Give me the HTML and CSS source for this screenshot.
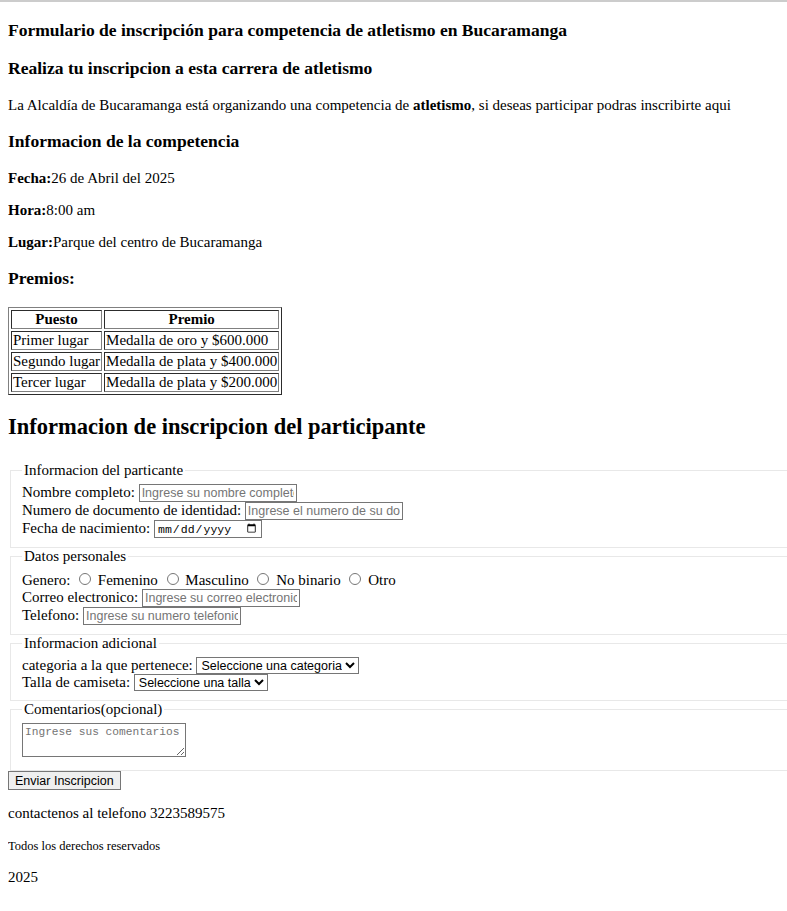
FILE: index.html
```html
<!DOCTYPE html>
<html lang="es">
<head>
<meta charset="utf-8">
<title>Formulario de inscripción</title>
<link rel="stylesheet" href="styles.css">
</head>
<body>
<header>
<h3>Formulario de inscripción para competencia de atletismo en Bucaramanga</h3>
</header>
<main>
<section>
<h3>Realiza tu inscripcion a esta carrera de atletismo</h3>
<p>La Alcaldía de Bucaramanga está organizando una competencia de <strong>atletismo</strong>, si deseas participar podras inscribirte aqui</p>
<h3>Informacion de la competencia</h3>
<p><strong>Fecha:</strong>26 de Abril del 2025</p>
<p><strong>Hora:</strong>8:00 am</p>
<p><strong>Lugar:</strong>Parque del centro de Bucaramanga</p>
<h3>Premios:</h3>
<table class="prizes">
<thead>
<tr><th>Puesto</th><th>Premio</th></tr>
</thead>
<tbody>
<tr><td>Primer lugar</td><td>Medalla de oro y $600.000</td></tr>
<tr><td>Segundo lugar</td><td>Medalla de plata y $400.000</td></tr>
<tr><td>Tercer lugar</td><td>Medalla de plata y $200.000</td></tr>
</tbody>
</table>
</section>
<section>
<h2 class="form-title">Informacion de inscripcion del participante</h2>
<form class="form">
<fieldset class="group">
<legend>Informacion del particante</legend>
<label for="nombre">Nombre completo:</label> <input class="field" type="text" id="nombre" placeholder="Ingrese su nombre completo"><br>
<label for="doc">Numero de documento de identidad:</label> <input class="field" type="text" id="doc" placeholder="Ingrese el numero de su documento"><br>
<label for="fecha">Fecha de nacimiento:</label> <input class="date" type="date" id="fecha">
</fieldset>
<fieldset class="group">
<legend>Datos personales</legend>
Genero: <input class="radio" type="radio" name="genero" id="f"> <label for="f">Femenino</label> <input class="radio" type="radio" name="genero" id="m"> <label for="m">Masculino</label> <input class="radio" type="radio" name="genero" id="nb"> <label for="nb">No binario</label> <input class="radio" type="radio" name="genero" id="o"> <label for="o">Otro</label><br>
<label for="correo">Correo electronico:</label> <input class="field" type="email" id="correo" placeholder="Ingrese su correo electronico"><br>
<label for="tel">Telefono:</label> <input class="field" type="tel" id="tel" placeholder="Ingrese su numero telefonico">
</fieldset>
<fieldset class="group">
<legend>Informacion adicional</legend>
<label for="cat">categoria a la que pertenece:</label> <select class="choice" id="cat"><option>Seleccione una categoria</option></select><br>
<label for="talla">Talla de camiseta:</label> <select class="choice" id="talla"><option>Seleccione una talla</option></select>
</fieldset>
<fieldset class="group">
<legend>Comentarios(opcional)</legend>
<textarea class="notes" placeholder="Ingrese sus comentarios"></textarea>
</fieldset>
<button class="submit" type="submit">Enviar Inscripcion</button>
</form>
</section>
</main>
<footer>
<p>contactenos al telefono 3223589575</p>
<p><small class="small">Todos los derechos reservados</small></p>
<p>2025</p>
</footer>
</body>
</html>
```
FILE: styles.css
```css
html {
  border-top: 2px solid #cccccc;
}
body {
  margin: 0 0 8px 8px;
  padding-right: 8px;
  font-family: "Liberation Serif", "Times New Roman", serif;
  font-size: 15px;
  color: #000;
  background: #fff;
}
h2 {
  font-size: 22.5px;
}
h3 {
  font-size: 17.55px;
}
.form-title {
  margin-bottom: 22px;
}
.prizes {
  border: 1px outset #808080;
  border-spacing: 2px;
}
.prizes th,
.prizes td {
  border: 1px inset #808080;
  padding: 0 1px;
  line-height: 17px;
}
.form {
  margin-right: -8px;
}
.group {
  margin: 0 0 0 2px;
  padding: 5px 11px 9px;
  border: 1px solid #e8e8e8;
  border-right: none;
}
.group legend {
  padding: 0 2px;
}
.field,
.choice,
.submit {
  font-family: "Liberation Sans", Arial, sans-serif;
  font-size: 12.5px;
}
.field {
  box-sizing: border-box;
  width: 158px;
  height: 18px;
  padding: 0 2px;
  border: 1px solid #767676;
}
.field::placeholder {
  color: #757575;
}
.date {
  box-sizing: border-box;
  width: 108px;
  height: 18px;
  padding: 0 2px;
  border: 1px solid #767676;
  font-family: "Liberation Mono", "Courier New", monospace;
  font-size: 11.5px;
}
.radio {
  width: 12px;
  height: 12px;
  margin: 3px 3px 0 5px;
}
.choice {
  box-sizing: border-box;
  height: 17px;
  padding: 0;
  border: 1px solid #767676;
  border-radius: 0;
  background: #fff;
  color: #000;
}
.notes {
  box-sizing: border-box;
  width: 164px;
  height: 34px;
  border: 1px solid #767676;
  padding: 2px;
  font-family: "Liberation Mono", "Courier New", monospace;
  font-size: 11.2px;
  vertical-align: baseline;
}
.notes::placeholder {
  color: #757575;
}
.submit {
  height: 19px;
  padding: 0 6px;
  border: 1px solid #767676;
  border-radius: 0;
  background: #efefef;
  color: #000;
  white-space: nowrap;
}
.small {
  font-size: 12.5px;
}
```
